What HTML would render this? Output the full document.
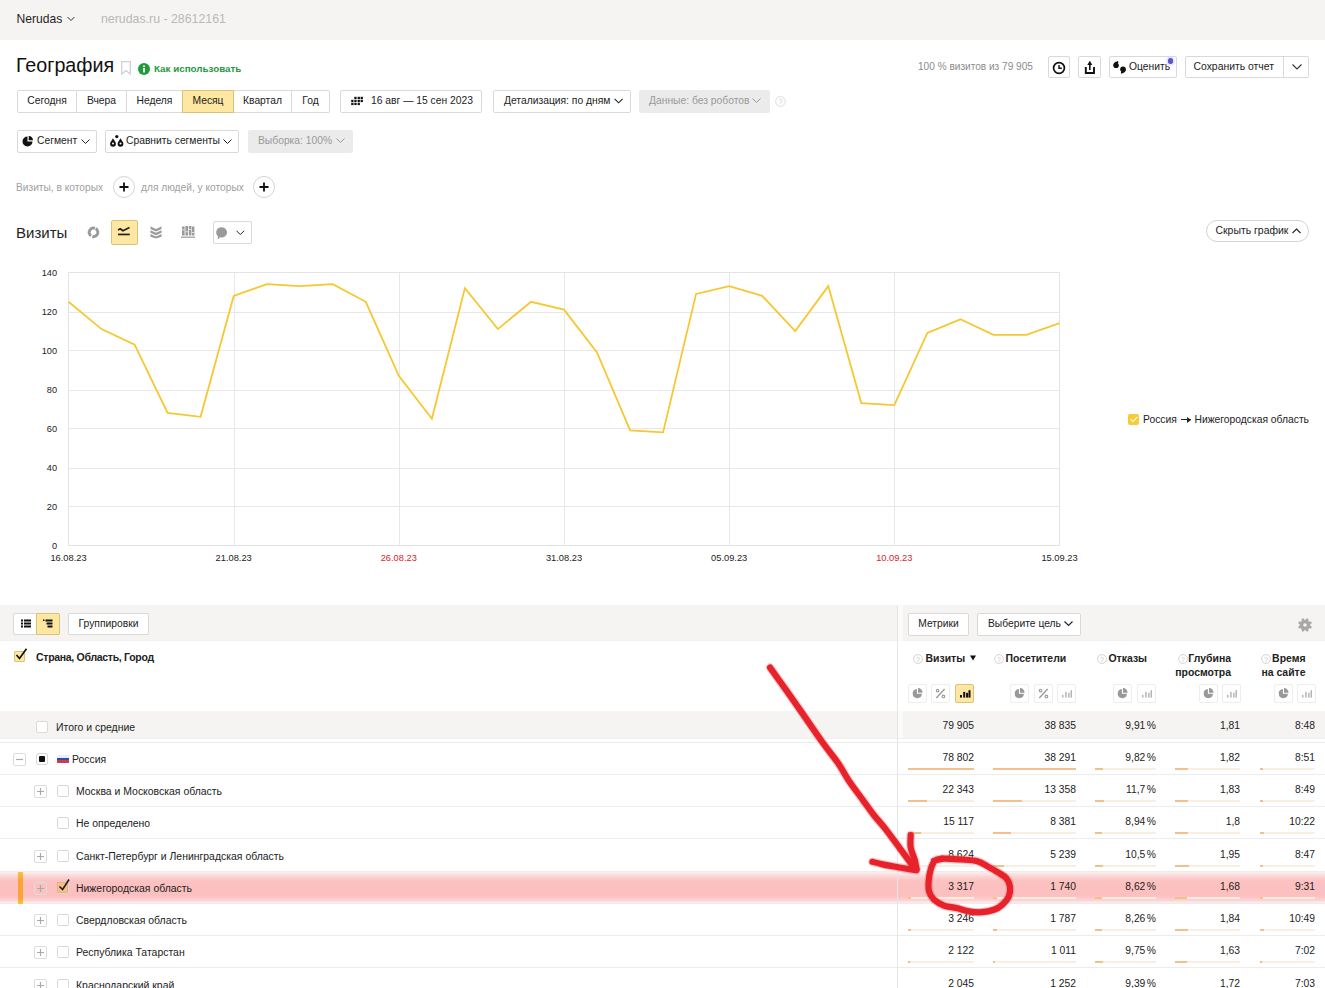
<!DOCTYPE html>
<html><head><meta charset="utf-8">
<style>
*{box-sizing:border-box;margin:0;padding:0}
html,body{width:1325px;height:988px;overflow:hidden;background:#fff}
body{position:relative;font-family:"Liberation Sans",sans-serif;color:#222;font-size:10.3px}
.a{position:absolute;white-space:nowrap}
.b{position:absolute;border:1px solid #d9d9d9;border-radius:2px;background:#fff;white-space:nowrap;font-size:10.3px;color:#222;line-height:19.5px}
.g{position:absolute;border-radius:2px;background:#ebebeb;white-space:nowrap;font-size:10.3px;color:#999;line-height:21.5px}
.seg{position:absolute;top:90px;height:23px;border:1px solid #d9d9d9;border-left:none;background:#fff;text-align:center;font-size:10.3px;color:#222;line-height:19.5px}
svg{position:absolute;overflow:visible}
</style></head><body>
<!-- top header -->
<div class="a" style="left:0;top:0;width:1325px;height:40px;background:#f5f4f2"></div>
<div class="a" style="left:16.5px;top:11.5px;font-size:12.1px;color:#1f1f1f">Nerudas</div>
<svg style="left:67px;top:16px" width="8" height="6"><path d="M0.5 1 L4 4.5 L7.5 1" fill="none" stroke="#333" stroke-width="1"/></svg>
<div class="a" style="left:101px;top:11.5px;font-size:12.35px;color:#b8b8b8">nerudas.ru - 28612161</div>

<!-- title -->
<div class="a" style="left:16px;top:54px;font-size:19.7px;color:#111">География</div>
<svg style="left:121px;top:61px" width="10" height="14"><path d="M0.7 0.7 H9.3 V13 L5 9.5 L0.7 13 Z" fill="none" stroke="#d0d0d0" stroke-width="1.3"/></svg>
<svg style="left:138px;top:63px" width="12" height="12"><circle cx="6" cy="6" r="6" fill="#1f9a3c"/><rect x="5.1" y="5" width="1.8" height="4.5" fill="#fff"/><circle cx="6" cy="3.3" r="1" fill="#fff"/></svg>
<div class="a" style="left:154px;top:63px;font-size:9.8px;font-weight:bold;color:#1f9a3c">Как использовать</div>

<div class="a" style="left:918px;top:61px;font-size:10.1px;color:#8c8c8c">100 % визитов из 79 905</div>
<div class="b" style="left:1048px;top:56px;width:22px;height:22px"></div>
<svg style="left:1051.5px;top:60.5px" width="14" height="14"><circle cx="7" cy="7" r="5.4" fill="none" stroke="#111" stroke-width="1.7"/><path d="M7 4 V7.3 H9.8" fill="none" stroke="#111" stroke-width="1.4"/></svg>
<div class="b" style="left:1078px;top:56px;width:23px;height:22px"></div>
<svg style="left:1083px;top:59px" width="14" height="16"><path d="M4.3 6 L6.8 1.8 L9.3 6Z" fill="#111"/><rect x="6" y="5" width="1.6" height="6" fill="#111"/><path d="M2.8 8 V14 H11 V8" fill="none" stroke="#111" stroke-width="1.9"/></svg>
<div class="b" style="left:1109px;top:56px;width:68px;height:22px;padding-left:19px">Оценить</div>
<svg style="left:1113px;top:60.5px" width="15" height="13"><circle cx="3.1" cy="4.4" r="2.7" fill="#111"/><path d="M0.4 4.4 C0.4 2.2 2 0.6 5 0 L5.4 1.7 C4.4 2 3.9 2.6 4.6 3 L1.6 4.6Z" fill="#111"/><circle cx="10" cy="8.3" r="2.8" fill="#111"/><path d="M12.8 8.3 C12.8 10.6 11.2 12.2 8.2 12.8 L7.8 11.1 C8.8 10.8 9.3 10.2 8.6 9.8 L11.6 8.2Z" fill="#111"/></svg>
<div class="a" style="left:1168px;top:58px;width:4.5px;height:5.5px;border-radius:50%;background:#5757c9;box-shadow:0 0 2px 1.5px #dcdcfa"></div>
<div class="b" style="left:1185px;top:56px;width:124px;height:22px"></div>
<div class="a" style="left:1193.5px;top:61px;font-size:10.4px;color:#222">Сохранить отчет</div>
<div class="a" style="left:1283px;top:57px;width:1px;height:20px;background:#d9d9d9"></div>
<svg style="left:1292px;top:64px" width="10" height="6"><path d="M0.5 0.5 L5 5 L9.5 0.5" fill="none" stroke="#333" stroke-width="1.1"/></svg>

<!-- period segmented -->
<div class="seg" style="left:17px;width:60px;border-left:1px solid #d9d9d9;border-radius:2px 0 0 2px">Сегодня</div>
<div class="seg" style="left:77px;width:50px">Вчера</div>
<div class="seg" style="left:127px;width:56px">Неделя</div>
<div class="seg" style="left:182px;width:52px;background:#fde7a1;border:1px solid #d9c27c">Месяц</div>
<div class="seg" style="left:234px;width:58px">Квартал</div>
<div class="seg" style="left:292px;width:38px;border-radius:0 2px 2px 0">Год</div>

<div class="b" style="left:340px;top:90px;width:142px;height:23px;padding-left:30px">16 авг — 15 сен 2023</div>
<svg style="left:351px;top:96px" width="13" height="11"><g fill="#111"><rect x="3.3" y="0.8" width="2.3" height="2.3"/><rect x="6.6" y="0.8" width="2.3" height="2.3"/><rect x="9.6" y="0.8" width="2.3" height="2.3"/><rect x="0.2" y="3.8" width="2.3" height="2.3"/><rect x="3.3" y="3.8" width="2.3" height="2.3"/><rect x="6.6" y="3.8" width="2.3" height="2.3"/><rect x="9.6" y="3.8" width="2.3" height="2.3"/><rect x="0.2" y="6.8" width="2.3" height="2.3"/><rect x="3.3" y="6.8" width="2.3" height="2.3"/><rect x="6.6" y="6.8" width="2.3" height="2.3"/></g></svg>
<div class="b" style="left:493px;top:90px;width:138px;height:23px;padding-left:10px">Детализация: по дням</div>
<svg style="left:614px;top:98px" width="10" height="6"><path d="M0.6 0.8 L4.6 4.8 L8.6 0.8" fill="none" stroke="#222" stroke-width="1.1"/></svg>
<div class="g" style="left:639px;top:90px;width:131px;height:23px;padding-left:10px">Данные: без роботов</div>
<svg style="left:752px;top:98px" width="9" height="6"><path d="M0.5 0.5 L4.5 4.5 L8.5 0.5" fill="none" stroke="#999" stroke-width="1"/></svg>
<svg style="left:775px;top:96px" width="11" height="11"><circle cx="5.5" cy="5.5" r="4.8" fill="none" stroke="#dcdcdc" stroke-width="1"/><text x="5.5" y="8.3" font-size="7.5" text-anchor="middle" fill="#ccc" font-family="Liberation Sans">?</text></svg>

<!-- segment row -->
<div class="b" style="left:17px;top:130px;width:80px;height:23px;padding-left:19px">Сегмент</div>
<svg style="left:22px;top:136px" width="11" height="11"><path d="M5.5 0.5 A5 5 0 1 0 10.5 5.5 L5.5 5.5 Z" fill="#111"/><path d="M6.7 0 A4.6 4.6 0 0 1 11 4.3 L6.7 4.3Z" fill="#111"/></svg>
<svg style="left:81px;top:139px" width="9" height="6"><path d="M0.5 0.5 L4.5 4.5 L8.5 0.5" fill="none" stroke="#222" stroke-width="1"/></svg>
<div class="b" style="left:105px;top:130px;width:134px;height:23px;padding-left:20px">Сравнить сегменты</div>
<svg style="left:110px;top:135px" width="14" height="12"><path d="M3 3.2 L5.6 7.6 A2.9 2.9 0 1 1 0.4 7.6 Z" fill="#111"/><circle cx="3" cy="8.6" r="1" fill="#fff"/><path d="M10.5 3.2 L13.1 7.6 A2.9 2.9 0 1 1 7.9 7.6 Z" fill="#111"/><circle cx="10.5" cy="8.6" r="1" fill="#fff"/><circle cx="6.8" cy="1.6" r="1.6" fill="#111"/></svg>
<svg style="left:223px;top:139px" width="9" height="6"><path d="M0.5 0.5 L4.5 4.5 L8.5 0.5" fill="none" stroke="#222" stroke-width="1"/></svg>
<div class="g" style="left:248px;top:130px;width:105px;height:23px;padding-left:10px">Выборка: 100%</div>
<svg style="left:336px;top:138px" width="9" height="6"><path d="M0.5 0.5 L4.5 4.5 L8.5 0.5" fill="none" stroke="#999" stroke-width="1"/></svg>

<!-- filters -->
<div class="a" style="left:16px;top:182px;font-size:10.2px;color:#a0a0a0">Визиты, в которых</div>
<div class="a" style="left:113px;top:176px;width:22px;height:22px;border:1px solid #d4d4d4;border-radius:50%"></div>
<svg style="left:119px;top:182px" width="10" height="10"><path d="M5 0.5 V9.5 M0.5 5 H9.5" stroke="#111" stroke-width="1.8"/></svg>
<div class="a" style="left:141px;top:182px;font-size:10.2px;color:#a0a0a0">для людей, у которых</div>
<div class="a" style="left:253px;top:176px;width:22px;height:22px;border:1px solid #d4d4d4;border-radius:50%"></div>
<svg style="left:259px;top:182px" width="10" height="10"><path d="M5 0.5 V9.5 M0.5 5 H9.5" stroke="#111" stroke-width="1.8"/></svg>

<!-- chart header -->
<div class="a" style="left:16px;top:224px;font-size:15px;color:#222">Визиты</div>
<svg style="left:87px;top:226px" width="13" height="13"><circle cx="6.5" cy="6.3" r="4.3" fill="none" stroke="#9a9a9a" stroke-width="3" stroke-dasharray="12 1.5 12 1.5" transform="rotate(-60 6.5 6.3)"/></svg>
<div class="a" style="left:111px;top:220px;width:27px;height:25px;background:#fde7a1;border:1px solid #d9c27c;border-radius:2px"></div>
<svg style="left:117px;top:225px" width="15" height="14"><path d="M1 5 L3.2 3.8 L6 5.8 L12.5 2.5" fill="none" stroke="#222" stroke-width="1.7" stroke-linejoin="round"/><rect x="1" y="8.6" width="11.8" height="1.7" fill="#222"/></svg>
<svg style="left:150px;top:226px" width="13" height="13"><path d="M0.5 0.5 L6 3 L11.5 0.5 V3 L6 5.5 L0.5 3Z M0.5 4.2 L6 6.7 L11.5 4.2 V6.7 L6 9.2 L0.5 6.7Z M0.5 7.9 L6 10.4 L11.5 7.9 V10.8 L6 12.5 L0.5 10.8Z" fill="#9a9a9a"/></svg>
<svg style="left:181px;top:225px" width="14" height="14"><g fill="#9a9a9a"><rect x="1" y="1.5" width="2.6" height="9"/><rect x="4.4" y="1" width="2.6" height="9.5"/><rect x="7.8" y="1" width="2.6" height="9.5"/><rect x="11" y="1.5" width="2.4" height="9"/></g><g fill="#fff"><rect x="1" y="4.5" width="2.6" height="0.7"/><rect x="4.4" y="6.5" width="2.6" height="0.7"/><rect x="7.8" y="4" width="2.6" height="0.7"/><rect x="11" y="7" width="2.4" height="0.7"/></g><rect x="0" y="11.6" width="14" height="1.2" fill="#9a9a9a"/></svg>
<div class="a" style="left:213px;top:221px;width:39px;height:23px;border:1px solid #d9d9d9;border-radius:2px"></div>
<svg style="left:216px;top:227px" width="12" height="13"><path d="M5.6 0.3 A5.3 5.1 0 1 1 4 10.2 L1.6 12.6 L2 9.2 A5.3 5.1 0 0 1 5.6 0.3Z" fill="#9a9a9a"/></svg>
<svg style="left:236px;top:230px" width="9" height="6"><path d="M0.5 0.8 L4.3 4.6 L8.1 0.8" fill="none" stroke="#222" stroke-width="1"/></svg>

<div class="a" style="left:1206px;top:220px;width:103px;height:22px;border:1px solid #d4d4d4;border-radius:11px"></div>
<div class="a" style="left:1215.5px;top:225px;font-size:10.45px;color:#222">Скрыть график</div>
<svg style="left:1292px;top:228px" width="9" height="6"><path d="M0.5 5 L4.5 1 L8.5 5" fill="none" stroke="#222" stroke-width="1.1"/></svg>

<!-- CHART -->
<svg id="chart" style="left:0;top:0" width="1325" height="600">
<line x1="68.5" y1="506.5" x2="1059.5" y2="506.5" stroke="#e8e8e8" stroke-width="1"/>
<line x1="68.5" y1="468.5" x2="1059.5" y2="468.5" stroke="#e8e8e8" stroke-width="1"/>
<line x1="68.5" y1="428.5" x2="1059.5" y2="428.5" stroke="#e8e8e8" stroke-width="1"/>
<line x1="68.5" y1="390.5" x2="1059.5" y2="390.5" stroke="#e8e8e8" stroke-width="1"/>
<line x1="68.5" y1="350.5" x2="1059.5" y2="350.5" stroke="#e8e8e8" stroke-width="1"/>
<line x1="68.5" y1="312.5" x2="1059.5" y2="312.5" stroke="#e8e8e8" stroke-width="1"/>
<line x1="68.5" y1="272.5" x2="1059.5" y2="272.5" stroke="#e8e8e8" stroke-width="1"/>
<line x1="234.5" y1="272.5" x2="234.5" y2="545.5" stroke="#e8e8e8" stroke-width="1"/>
<line x1="399.5" y1="272.5" x2="399.5" y2="545.5" stroke="#e8e8e8" stroke-width="1"/>
<line x1="564.5" y1="272.5" x2="564.5" y2="545.5" stroke="#e8e8e8" stroke-width="1"/>
<line x1="729.5" y1="272.5" x2="729.5" y2="545.5" stroke="#e8e8e8" stroke-width="1"/>
<line x1="894.5" y1="272.5" x2="894.5" y2="545.5" stroke="#e8e8e8" stroke-width="1"/>
<rect x="68.5" y="272.5" width="991.0" height="273.0" fill="none" stroke="#e3e3e3" stroke-width="1"/>
<text x="57" y="548.8" text-anchor="end" font-size="9.2" fill="#222" font-family="Liberation Sans">0</text>
<text x="57" y="509.8" text-anchor="end" font-size="9.2" fill="#222" font-family="Liberation Sans">20</text>
<text x="57" y="470.8" text-anchor="end" font-size="9.2" fill="#222" font-family="Liberation Sans">40</text>
<text x="57" y="431.8" text-anchor="end" font-size="9.2" fill="#222" font-family="Liberation Sans">60</text>
<text x="57" y="392.8" text-anchor="end" font-size="9.2" fill="#222" font-family="Liberation Sans">80</text>
<text x="57" y="353.8" text-anchor="end" font-size="9.2" fill="#222" font-family="Liberation Sans">100</text>
<text x="57" y="314.8" text-anchor="end" font-size="9.2" fill="#222" font-family="Liberation Sans">120</text>
<text x="57" y="275.8" text-anchor="end" font-size="9.2" fill="#222" font-family="Liberation Sans">140</text>
<text x="68.5" y="561" text-anchor="middle" font-size="9.3" fill="#222" font-family="Liberation Sans">16.08.23</text>
<text x="233.7" y="561" text-anchor="middle" font-size="9.3" fill="#222" font-family="Liberation Sans">21.08.23</text>
<text x="398.8" y="561" text-anchor="middle" font-size="9.3" fill="#d9232d" font-family="Liberation Sans">26.08.23</text>
<text x="564.0" y="561" text-anchor="middle" font-size="9.3" fill="#222" font-family="Liberation Sans">31.08.23</text>
<text x="729.2" y="561" text-anchor="middle" font-size="9.3" fill="#222" font-family="Liberation Sans">05.09.23</text>
<text x="894.3" y="561" text-anchor="middle" font-size="9.3" fill="#d9232d" font-family="Liberation Sans">10.09.23</text>
<text x="1059.5" y="561" text-anchor="middle" font-size="9.3" fill="#222" font-family="Liberation Sans">15.09.23</text>
<polyline points="68.5,301.8 101.5,329.1 134.6,344.6 167.6,412.9 200.6,416.8 233.7,295.9 266.7,284.2 299.7,286.1 332.8,284.2 365.8,301.8 398.8,375.9 431.9,418.8 464.9,288.1 497.9,329.1 531.0,301.8 564.0,309.6 597.0,352.4 630.1,430.4 663.1,432.4 696.1,293.9 729.2,286.1 762.2,295.9 795.2,331.0 828.3,286.1 861.3,403.1 894.3,405.1 927.4,332.9 960.4,319.3 993.4,334.9 1026.5,334.9 1059.5,323.2" fill="none" stroke="#f5c832" stroke-width="1.8" stroke-linejoin="miter"/>
</svg>

<!-- legend -->
<div class="a" style="left:1128px;top:414px;width:11px;height:11px;border-radius:2px;background:#f8cb35"></div>
<svg style="left:1130px;top:416px" width="8" height="7"><path d="M0.7 3.2 L3 5.6 L7.3 0.8" fill="none" stroke="#fff" stroke-width="1.1"/></svg>
<div class="a" style="left:1143px;top:414px;font-size:10.3px;color:#222">Россия <span style="display:inline-block;width:10px;height:1.3px;background:#222;vertical-align:3px;position:relative;margin:0 1px"></span> Нижегородская область</div><svg style="left:1187px;top:417px" width="4" height="6"><path d="M0 0 L4 3 L0 6Z" fill="#222"/></svg>

<!-- TABLE -->
<div id="table">
<div class="a" style="left:0;top:605px;width:1325px;height:36px;background:#f5f4f2;border-bottom:1px solid #f0efed"></div>
<div class="a" style="left:897px;top:605px;width:1px;height:383px;background:#e6e6e6"></div>
<div class="a" style="left:898px;top:605px;width:5px;height:36px;background:#fafaf9"></div>
<div class="a" style="left:13px;top:613px;width:47px;height:22px;border:1px solid #d9d9d9;border-radius:2px;background:#fff"></div>
<div class="a" style="left:36px;top:613px;width:24px;height:22px;background:#fde7a1;border:1px solid #d9c27c;border-radius:0 2px 2px 0"></div>
<svg style="left:21px;top:619px" width="10" height="9"><g fill="#111"><rect x="0" y="0.5" width="2" height="2"/><rect x="3" y="0.5" width="7" height="2"/><rect x="0" y="3.5" width="2" height="2"/><rect x="3" y="3.5" width="7" height="2"/><rect x="0" y="6.5" width="2" height="2"/><rect x="3" y="6.5" width="7" height="2"/></g></svg>
<svg style="left:43px;top:619px" width="10" height="9"><g fill="#111"><rect x="0" y="0.5" width="1.5" height="1.5"/><rect x="2.5" y="0.5" width="7" height="2"/><rect x="3.5" y="3.5" width="6" height="2"/><rect x="4.5" y="6.5" width="5" height="2"/></g></svg>
<div class="b" style="left:68px;top:613px;width:81px;height:22px;text-align:center">Группировки</div>
<div class="b" style="left:908px;top:613px;width:61px;height:23px;text-align:center">Метрики</div>
<div class="b" style="left:977px;top:613px;width:104px;height:23px;padding-left:10px">Выберите цель</div>
<svg style="left:1064px;top:621px" width="9" height="6"><path d="M0.5 0.5 L4.5 4.5 L8.5 0.5" fill="none" stroke="#222" stroke-width="1.1"/></svg>
<svg style="left:1297.5px;top:617.5px" width="14" height="14" viewBox="0 0 14 14"><path transform="rotate(22 7 7)" fill="#a8a8a8" d="M6 0h2l.4 1.9 1.3.6 1.6-1.1 1.4 1.4-1.1 1.6.6 1.3L14 6v2l-1.9.4-.6 1.3 1.1 1.6-1.4 1.4-1.6-1.1-1.3.6L8 14H6l-.4-1.9-1.3-.6-1.6 1.1-1.4-1.4 1.1-1.6-.6-1.3L0 8V6l1.9-.4.6-1.3L1.4 2.7l1.4-1.4 1.6 1.1 1.3-.6Z"/><circle cx="7" cy="7" r="1.8" fill="#f5f4f2"/></svg>
<div class="a" style="left:14px;top:651px;width:11px;height:11px;background:#fde7a1;border:1px solid #d9c27c;border-radius:1px"></div>
<svg style="left:15px;top:648px" width="13" height="13"><path d="M1.5 7 L4.5 10.5 L11.5 0.8" fill="none" stroke="#111" stroke-width="1.7"/></svg>
<div class="a" style="left:36px;top:651px;font-size:10.5px;letter-spacing:-0.3px;font-weight:bold;color:#222">Страна, Область, Город</div>
<svg style="left:913px;top:654px" width="10" height="10"><circle cx="5" cy="5" r="4.4" fill="none" stroke="#d4d4d4" stroke-width="1"/><text x="5" y="7.6" font-size="7" text-anchor="middle" fill="#c8c8c8" font-family="Liberation Sans">?</text></svg>
<div class="a" style="left:925.5px;top:652px;font-size:10.45px;font-weight:bold;color:#222;line-height:14px">Визиты</div>
<svg style="left:970px;top:655px" width="6" height="6"><path d="M0 0.5 H6 L3 5.5Z" fill="#111"/></svg>
<svg style="left:994px;top:654px" width="10" height="10"><circle cx="5" cy="5" r="4.4" fill="none" stroke="#d4d4d4" stroke-width="1"/><text x="5" y="7.6" font-size="7" text-anchor="middle" fill="#c8c8c8" font-family="Liberation Sans">?</text></svg>
<div class="a" style="left:1005.5px;top:652px;font-size:10.45px;font-weight:bold;color:#222;line-height:14px">Посетители</div>
<svg style="left:1097px;top:654px" width="10" height="10"><circle cx="5" cy="5" r="4.4" fill="none" stroke="#d4d4d4" stroke-width="1"/><text x="5" y="7.6" font-size="7" text-anchor="middle" fill="#c8c8c8" font-family="Liberation Sans">?</text></svg>
<div class="a" style="left:1108.5px;top:652px;font-size:10.45px;font-weight:bold;color:#222;line-height:14px">Отказы</div>
<svg style="left:1178px;top:654px" width="10" height="10"><circle cx="5" cy="5" r="4.4" fill="none" stroke="#d4d4d4" stroke-width="1"/><text x="5" y="7.6" font-size="7" text-anchor="middle" fill="#c8c8c8" font-family="Liberation Sans">?</text></svg>
<div class="a" style="left:1131px;width:100px;text-align:right;top:652px;font-size:10.45px;font-weight:bold;color:#222;line-height:14px">Глубина</div>
<div class="a" style="left:1131px;width:100px;text-align:right;top:666px;font-size:10.45px;font-weight:bold;color:#222;line-height:14px">просмотра</div>
<svg style="left:1261px;top:654px" width="10" height="10"><circle cx="5" cy="5" r="4.4" fill="none" stroke="#d4d4d4" stroke-width="1"/><text x="5" y="7.6" font-size="7" text-anchor="middle" fill="#c8c8c8" font-family="Liberation Sans">?</text></svg>
<div class="a" style="left:1205.5px;width:100px;text-align:right;top:652px;font-size:10.45px;font-weight:bold;color:#222;line-height:14px">Время</div>
<div class="a" style="left:1205.5px;width:100px;text-align:right;top:666px;font-size:10.45px;font-weight:bold;color:#222;line-height:14px">на сайте</div>
<div class="a" style="left:908px;top:684px;width:19px;height:19px;border:1px solid #ededed;border-radius:2px;background:#fff"></div>
<svg style="left:912px;top:688px" width="11" height="11"><path d="M4.9 1 A4.6 4.6 0 1 0 9.9 5.8 L4.9 5.8Z" fill="#999"/><path d="M6 0 A4.6 4.6 0 0 1 10.6 4.7 L6 4.7Z" fill="#999"/></svg>
<div class="a" style="left:931px;top:684px;width:19px;height:19px;border:1px solid #ededed;border-radius:2px;background:#fff"></div>
<svg style="left:935px;top:688px" width="11" height="11"><path d="M9.6 1 L1.3 10" stroke="#9a9a9a" stroke-width="1.3"/><circle cx="2.6" cy="2.6" r="1.3" fill="none" stroke="#9a9a9a" stroke-width="1.1"/><circle cx="8.4" cy="8.4" r="1.3" fill="none" stroke="#9a9a9a" stroke-width="1.1"/></svg>
<div class="a" style="left:955px;top:684px;width:19px;height:19px;border:1px solid #d9c27c;border-radius:2px;background:#fde7a1"></div>
<svg style="left:959px;top:688px" width="11" height="11"><g fill="#111"><rect x="1" y="7" width="2" height="2.6"/><rect x="4.2" y="3.9" width="2" height="5.7"/><rect x="7.1" y="4.8" width="2" height="4.8"/><rect x="9.5" y="2.2" width="2" height="7.4"/></g></svg>
<div class="a" style="left:1010px;top:684px;width:19px;height:19px;border:1px solid #ededed;border-radius:2px;background:#fff"></div>
<svg style="left:1014px;top:688px" width="11" height="11"><path d="M4.9 1 A4.6 4.6 0 1 0 9.9 5.8 L4.9 5.8Z" fill="#999"/><path d="M6 0 A4.6 4.6 0 0 1 10.6 4.7 L6 4.7Z" fill="#999"/></svg>
<div class="a" style="left:1034px;top:684px;width:19px;height:19px;border:1px solid #ededed;border-radius:2px;background:#fff"></div>
<svg style="left:1038px;top:688px" width="11" height="11"><path d="M9.6 1 L1.3 10" stroke="#9a9a9a" stroke-width="1.3"/><circle cx="2.6" cy="2.6" r="1.3" fill="none" stroke="#9a9a9a" stroke-width="1.1"/><circle cx="8.4" cy="8.4" r="1.3" fill="none" stroke="#9a9a9a" stroke-width="1.1"/></svg>
<div class="a" style="left:1057px;top:684px;width:19px;height:19px;border:1px solid #ededed;border-radius:2px;background:#fff"></div>
<svg style="left:1061px;top:688px" width="11" height="11"><g fill="#b5b5b5"><rect x="1" y="7" width="1.5" height="2.6"/><rect x="4.2" y="3.9" width="1.5" height="5.7"/><rect x="7.1" y="4.8" width="1.5" height="4.8"/><rect x="9.5" y="2.2" width="1.5" height="7.4"/></g></svg>
<div class="a" style="left:1113px;top:684px;width:19px;height:19px;border:1px solid #ededed;border-radius:2px;background:#fff"></div>
<svg style="left:1117px;top:688px" width="11" height="11"><path d="M4.9 1 A4.6 4.6 0 1 0 9.9 5.8 L4.9 5.8Z" fill="#999"/><path d="M6 0 A4.6 4.6 0 0 1 10.6 4.7 L6 4.7Z" fill="#999"/></svg>
<div class="a" style="left:1137px;top:684px;width:19px;height:19px;border:1px solid #ededed;border-radius:2px;background:#fff"></div>
<svg style="left:1141px;top:688px" width="11" height="11"><g fill="#b5b5b5"><rect x="1" y="7" width="1.5" height="2.6"/><rect x="4.2" y="3.9" width="1.5" height="5.7"/><rect x="7.1" y="4.8" width="1.5" height="4.8"/><rect x="9.5" y="2.2" width="1.5" height="7.4"/></g></svg>
<div class="a" style="left:1199px;top:684px;width:19px;height:19px;border:1px solid #ededed;border-radius:2px;background:#fff"></div>
<svg style="left:1203px;top:688px" width="11" height="11"><path d="M4.9 1 A4.6 4.6 0 1 0 9.9 5.8 L4.9 5.8Z" fill="#999"/><path d="M6 0 A4.6 4.6 0 0 1 10.6 4.7 L6 4.7Z" fill="#999"/></svg>
<div class="a" style="left:1222px;top:684px;width:19px;height:19px;border:1px solid #ededed;border-radius:2px;background:#fff"></div>
<svg style="left:1226px;top:688px" width="11" height="11"><g fill="#b5b5b5"><rect x="1" y="7" width="1.5" height="2.6"/><rect x="4.2" y="3.9" width="1.5" height="5.7"/><rect x="7.1" y="4.8" width="1.5" height="4.8"/><rect x="9.5" y="2.2" width="1.5" height="7.4"/></g></svg>
<div class="a" style="left:1274px;top:684px;width:19px;height:19px;border:1px solid #ededed;border-radius:2px;background:#fff"></div>
<svg style="left:1278px;top:688px" width="11" height="11"><path d="M4.9 1 A4.6 4.6 0 1 0 9.9 5.8 L4.9 5.8Z" fill="#999"/><path d="M6 0 A4.6 4.6 0 0 1 10.6 4.7 L6 4.7Z" fill="#999"/></svg>
<div class="a" style="left:1297px;top:684px;width:19px;height:19px;border:1px solid #ededed;border-radius:2px;background:#fff"></div>
<svg style="left:1301px;top:688px" width="11" height="11"><g fill="#b5b5b5"><rect x="1" y="7" width="1.5" height="2.6"/><rect x="4.2" y="3.9" width="1.5" height="5.7"/><rect x="7.1" y="4.8" width="1.5" height="4.8"/><rect x="9.5" y="2.2" width="1.5" height="7.4"/></g></svg>
<div class="a" style="left:0;top:872px;width:1325px;height:31px;background:linear-gradient(#fdf0f0 0px,#fcdcdc 3px,#fcc4c4 8px,#fcc0c0 12px,#fcc0c0 24px,#fcd2d2 28px,#fdeeee 31px)"></div>
<div class="a" style="left:0;top:711px;width:1325px;height:27px;background:#f5f4f2"></div>
<div class="a" style="left:0;top:738px;width:1325px;height:1px;background:#efefef"></div>
<div class="a" style="left:898px;top:711px;width:5px;height:27px;background:#fafaf9"></div>
<div class="a" style="left:0;top:742px;width:1325px;height:1px;background:#ececec"></div>
<div class="a" style="left:36px;top:721px;width:12px;height:12px;border:1px solid #d9d9d9;border-radius:2px;background:#fff"></div>
<div class="a" style="left:56px;top:721px;font-size:10.45px;color:#222;line-height:14px">Итого и средние</div>
<div class="a" style="left:874px;width:100px;text-align:right;top:719px;font-size:10.3px;color:#222;line-height:14px">79 905</div>
<div class="a" style="left:976px;width:100px;text-align:right;top:719px;font-size:10.3px;color:#222;line-height:14px">38 835</div>
<div class="a" style="left:1056px;width:100px;text-align:right;top:719px;font-size:10.3px;color:#222;line-height:14px">9,91<span style="margin-left:1.5px">%</span></div>
<div class="a" style="left:1140px;width:100px;text-align:right;top:719px;font-size:10.3px;color:#222;line-height:14px">1,81</div>
<div class="a" style="left:1215px;width:100px;text-align:right;top:719px;font-size:10.3px;color:#222;line-height:14px">8:48</div>
<div class="a" style="left:0;top:774px;width:1325px;height:1px;background:#ececec"></div>
<div class="a" style="left:13px;top:753px;width:13px;height:13px;border:1px solid #dcdcdc;border-radius:2px;background:#fff"></div>
<svg style="left:13px;top:753px" width="13" height="13"><path d="M3 6.5 H10" stroke="#aaa" stroke-width="1.2"/></svg>
<div class="a" style="left:36px;top:753px;width:12px;height:12px;border:1px solid #d9d9d9;border-radius:2px;background:#fff"></div>
<div class="a" style="left:39px;top:756px;width:6px;height:6px;border-radius:1px;background:#111"></div>
<div class="a" style="left:57px;top:755px;width:12px;height:8px;background:linear-gradient(#e9eef8 0 2.6px,#2f49b8 2.6px 5.3px,#cf3c46 5.3px)"></div>
<div class="a" style="left:72px;top:753px;font-size:10.45px;color:#222;line-height:14px">Россия</div>
<div class="a" style="left:874px;width:100px;text-align:right;top:751px;font-size:10.3px;color:#222;line-height:14px">78 802</div>
<div class="a" style="left:976px;width:100px;text-align:right;top:751px;font-size:10.3px;color:#222;line-height:14px">38 291</div>
<div class="a" style="left:1056px;width:100px;text-align:right;top:751px;font-size:10.3px;color:#222;line-height:14px">9,82<span style="margin-left:1.5px">%</span></div>
<div class="a" style="left:1140px;width:100px;text-align:right;top:751px;font-size:10.3px;color:#222;line-height:14px">1,82</div>
<div class="a" style="left:1215px;width:100px;text-align:right;top:751px;font-size:10.3px;color:#222;line-height:14px">8:51</div>
<div class="a" style="left:908px;top:768px;width:66px;height:2px;background:#fbeee0"></div>
<div class="a" style="left:908px;top:768px;width:66px;height:2px;background:#f2c08c"></div>
<div class="a" style="left:993px;top:768px;width:83px;height:2px;background:#fbeee0"></div>
<div class="a" style="left:993px;top:768px;width:83px;height:2px;background:#f2c08c"></div>
<div class="a" style="left:1095px;top:768px;width:61px;height:2px;background:#fbeee0"></div>
<div class="a" style="left:1095px;top:768px;width:8px;height:2px;background:#f2c08c"></div>
<div class="a" style="left:1175px;top:768px;width:65px;height:2px;background:#fbeee0"></div>
<div class="a" style="left:1175px;top:768px;width:13px;height:2px;background:#f2c08c"></div>
<div class="a" style="left:1260px;top:768px;width:55px;height:2px;background:#fbeee0"></div>
<div class="a" style="left:1260px;top:768px;width:3px;height:2px;background:#f2c08c"></div>
<div class="a" style="left:0;top:806px;width:1325px;height:1px;background:#ececec"></div>
<div class="a" style="left:34px;top:785px;width:13px;height:13px;border:1px solid #dcdcdc;border-radius:2px;background:#fff"></div>
<svg style="left:34px;top:785px" width="13" height="13"><path d="M3 6.5 H10 M6.5 3 V10" stroke="#aaa" stroke-width="1.2"/></svg>
<div class="a" style="left:57px;top:785px;width:12px;height:12px;border:1px solid #d9d9d9;border-radius:2px;background:#fff"></div>
<div class="a" style="left:76px;top:785px;font-size:10.45px;color:#222;line-height:14px">Москва и Московская область</div>
<div class="a" style="left:874px;width:100px;text-align:right;top:783px;font-size:10.3px;color:#222;line-height:14px">22 343</div>
<div class="a" style="left:976px;width:100px;text-align:right;top:783px;font-size:10.3px;color:#222;line-height:14px">13 358</div>
<div class="a" style="left:1056px;width:100px;text-align:right;top:783px;font-size:10.3px;color:#222;line-height:14px">11,7<span style="margin-left:1.5px">%</span></div>
<div class="a" style="left:1140px;width:100px;text-align:right;top:783px;font-size:10.3px;color:#222;line-height:14px">1,83</div>
<div class="a" style="left:1215px;width:100px;text-align:right;top:783px;font-size:10.3px;color:#222;line-height:14px">8:49</div>
<div class="a" style="left:908px;top:800px;width:66px;height:2px;background:#fbeee0"></div>
<div class="a" style="left:908px;top:800px;width:19px;height:2px;background:#f2c08c"></div>
<div class="a" style="left:993px;top:800px;width:83px;height:2px;background:#fbeee0"></div>
<div class="a" style="left:993px;top:800px;width:29px;height:2px;background:#f2c08c"></div>
<div class="a" style="left:1095px;top:800px;width:61px;height:2px;background:#fbeee0"></div>
<div class="a" style="left:1095px;top:800px;width:9px;height:2px;background:#f2c08c"></div>
<div class="a" style="left:1175px;top:800px;width:65px;height:2px;background:#fbeee0"></div>
<div class="a" style="left:1175px;top:800px;width:13px;height:2px;background:#f2c08c"></div>
<div class="a" style="left:1260px;top:800px;width:55px;height:2px;background:#fbeee0"></div>
<div class="a" style="left:1260px;top:800px;width:3px;height:2px;background:#f2c08c"></div>
<div class="a" style="left:0;top:838px;width:1325px;height:1px;background:#ececec"></div>
<div class="a" style="left:57px;top:817px;width:12px;height:12px;border:1px solid #d9d9d9;border-radius:2px;background:#fff"></div>
<div class="a" style="left:76px;top:817px;font-size:10.45px;color:#222;line-height:14px">Не определено</div>
<div class="a" style="left:874px;width:100px;text-align:right;top:815px;font-size:10.3px;color:#222;line-height:14px">15 117</div>
<div class="a" style="left:976px;width:100px;text-align:right;top:815px;font-size:10.3px;color:#222;line-height:14px">8 381</div>
<div class="a" style="left:1056px;width:100px;text-align:right;top:815px;font-size:10.3px;color:#222;line-height:14px">8,94<span style="margin-left:1.5px">%</span></div>
<div class="a" style="left:1140px;width:100px;text-align:right;top:815px;font-size:10.3px;color:#222;line-height:14px">1,8</div>
<div class="a" style="left:1215px;width:100px;text-align:right;top:815px;font-size:10.3px;color:#222;line-height:14px">10:22</div>
<div class="a" style="left:908px;top:832px;width:66px;height:2px;background:#fbeee0"></div>
<div class="a" style="left:908px;top:832px;width:13px;height:2px;background:#f2c08c"></div>
<div class="a" style="left:993px;top:832px;width:83px;height:2px;background:#fbeee0"></div>
<div class="a" style="left:993px;top:832px;width:18px;height:2px;background:#f2c08c"></div>
<div class="a" style="left:1095px;top:832px;width:61px;height:2px;background:#fbeee0"></div>
<div class="a" style="left:1095px;top:832px;width:7px;height:2px;background:#f2c08c"></div>
<div class="a" style="left:1175px;top:832px;width:65px;height:2px;background:#fbeee0"></div>
<div class="a" style="left:1175px;top:832px;width:13px;height:2px;background:#f2c08c"></div>
<div class="a" style="left:1260px;top:832px;width:55px;height:2px;background:#fbeee0"></div>
<div class="a" style="left:1260px;top:832px;width:4px;height:2px;background:#f2c08c"></div>
<div class="a" style="left:0;top:871px;width:1325px;height:1px;background:#ececec"></div>
<div class="a" style="left:34px;top:850px;width:13px;height:13px;border:1px solid #dcdcdc;border-radius:2px;background:#fff"></div>
<svg style="left:34px;top:850px" width="13" height="13"><path d="M3 6.5 H10 M6.5 3 V10" stroke="#aaa" stroke-width="1.2"/></svg>
<div class="a" style="left:57px;top:850px;width:12px;height:12px;border:1px solid #d9d9d9;border-radius:2px;background:#fff"></div>
<div class="a" style="left:76px;top:850px;font-size:10.45px;color:#222;line-height:14px">Санкт-Петербург и Ленинградская область</div>
<div class="a" style="left:874px;width:100px;text-align:right;top:848px;font-size:10.3px;color:#222;line-height:14px">8 624</div>
<div class="a" style="left:976px;width:100px;text-align:right;top:848px;font-size:10.3px;color:#222;line-height:14px">5 239</div>
<div class="a" style="left:1056px;width:100px;text-align:right;top:848px;font-size:10.3px;color:#222;line-height:14px">10,5<span style="margin-left:1.5px">%</span></div>
<div class="a" style="left:1140px;width:100px;text-align:right;top:848px;font-size:10.3px;color:#222;line-height:14px">1,95</div>
<div class="a" style="left:1215px;width:100px;text-align:right;top:848px;font-size:10.3px;color:#222;line-height:14px">8:47</div>
<div class="a" style="left:908px;top:865px;width:66px;height:2px;background:#fbeee0"></div>
<div class="a" style="left:908px;top:865px;width:7px;height:2px;background:#f2c08c"></div>
<div class="a" style="left:993px;top:865px;width:83px;height:2px;background:#fbeee0"></div>
<div class="a" style="left:993px;top:865px;width:11px;height:2px;background:#f2c08c"></div>
<div class="a" style="left:1095px;top:865px;width:61px;height:2px;background:#fbeee0"></div>
<div class="a" style="left:1095px;top:865px;width:8px;height:2px;background:#f2c08c"></div>
<div class="a" style="left:1175px;top:865px;width:65px;height:2px;background:#fbeee0"></div>
<div class="a" style="left:1175px;top:865px;width:14px;height:2px;background:#f2c08c"></div>
<div class="a" style="left:1260px;top:865px;width:55px;height:2px;background:#fbeee0"></div>
<div class="a" style="left:1260px;top:865px;width:3px;height:2px;background:#f2c08c"></div>
<div class="a" style="left:0;top:903px;width:1325px;height:1px;background:#ececec"></div>
<div class="a" style="left:34px;top:882px;width:13px;height:13px;border:1px solid #dcdcdc;border-radius:2px;background:transparent"></div>
<svg style="left:34px;top:882px" width="13" height="13"><path d="M3 6.5 H10 M6.5 3 V10" stroke="#aaa" stroke-width="1.2"/></svg>
<div class="a" style="left:57px;top:882px;width:12px;height:12px;border:1px solid #d9d9d9;border-radius:2px;background:transparent"></div>
<div class="a" style="left:57px;top:882px;width:11px;height:11px;border:1px solid #e9b27a;border-radius:1px;background:#f4bf8c"></div>
<svg style="left:58px;top:878px" width="13" height="15"><path d="M1.5 8.5 L4.6 11.5 L11 1.5" fill="none" stroke="#222" stroke-width="1.6"/></svg>
<div class="a" style="left:76px;top:882px;font-size:10.45px;color:#222;line-height:14px">Нижегородская область</div>
<div class="a" style="left:874px;width:100px;text-align:right;top:880px;font-size:10.3px;color:#222;line-height:14px">3 317</div>
<div class="a" style="left:976px;width:100px;text-align:right;top:880px;font-size:10.3px;color:#222;line-height:14px">1 740</div>
<div class="a" style="left:1056px;width:100px;text-align:right;top:880px;font-size:10.3px;color:#222;line-height:14px">8,62<span style="margin-left:1.5px">%</span></div>
<div class="a" style="left:1140px;width:100px;text-align:right;top:880px;font-size:10.3px;color:#222;line-height:14px">1,68</div>
<div class="a" style="left:1215px;width:100px;text-align:right;top:880px;font-size:10.3px;color:#222;line-height:14px">9:31</div>
<div class="a" style="left:908px;top:897px;width:66px;height:2px;background:#fbeee0"></div>
<div class="a" style="left:908px;top:897px;width:3px;height:2px;background:#f2c08c"></div>
<div class="a" style="left:993px;top:897px;width:83px;height:2px;background:#fbeee0"></div>
<div class="a" style="left:993px;top:897px;width:4px;height:2px;background:#f2c08c"></div>
<div class="a" style="left:1095px;top:897px;width:61px;height:2px;background:#fbeee0"></div>
<div class="a" style="left:1095px;top:897px;width:7px;height:2px;background:#f2c08c"></div>
<div class="a" style="left:1175px;top:897px;width:65px;height:2px;background:#fbeee0"></div>
<div class="a" style="left:1175px;top:897px;width:12px;height:2px;background:#f2c08c"></div>
<div class="a" style="left:1260px;top:897px;width:55px;height:2px;background:#fbeee0"></div>
<div class="a" style="left:1260px;top:897px;width:3px;height:2px;background:#f2c08c"></div>
<div class="a" style="left:0;top:935px;width:1325px;height:1px;background:#ececec"></div>
<div class="a" style="left:34px;top:914px;width:13px;height:13px;border:1px solid #dcdcdc;border-radius:2px;background:#fff"></div>
<svg style="left:34px;top:914px" width="13" height="13"><path d="M3 6.5 H10 M6.5 3 V10" stroke="#aaa" stroke-width="1.2"/></svg>
<div class="a" style="left:57px;top:914px;width:12px;height:12px;border:1px solid #d9d9d9;border-radius:2px;background:#fff"></div>
<div class="a" style="left:76px;top:914px;font-size:10.45px;color:#222;line-height:14px">Свердловская область</div>
<div class="a" style="left:874px;width:100px;text-align:right;top:912px;font-size:10.3px;color:#222;line-height:14px">3 246</div>
<div class="a" style="left:976px;width:100px;text-align:right;top:912px;font-size:10.3px;color:#222;line-height:14px">1 787</div>
<div class="a" style="left:1056px;width:100px;text-align:right;top:912px;font-size:10.3px;color:#222;line-height:14px">8,26<span style="margin-left:1.5px">%</span></div>
<div class="a" style="left:1140px;width:100px;text-align:right;top:912px;font-size:10.3px;color:#222;line-height:14px">1,84</div>
<div class="a" style="left:1215px;width:100px;text-align:right;top:912px;font-size:10.3px;color:#222;line-height:14px">10:49</div>
<div class="a" style="left:908px;top:929px;width:66px;height:2px;background:#fbeee0"></div>
<div class="a" style="left:908px;top:929px;width:3px;height:2px;background:#f2c08c"></div>
<div class="a" style="left:993px;top:929px;width:83px;height:2px;background:#fbeee0"></div>
<div class="a" style="left:993px;top:929px;width:4px;height:2px;background:#f2c08c"></div>
<div class="a" style="left:1095px;top:929px;width:61px;height:2px;background:#fbeee0"></div>
<div class="a" style="left:1095px;top:929px;width:7px;height:2px;background:#f2c08c"></div>
<div class="a" style="left:1175px;top:929px;width:65px;height:2px;background:#fbeee0"></div>
<div class="a" style="left:1175px;top:929px;width:13px;height:2px;background:#f2c08c"></div>
<div class="a" style="left:1260px;top:929px;width:55px;height:2px;background:#fbeee0"></div>
<div class="a" style="left:1260px;top:929px;width:4px;height:2px;background:#f2c08c"></div>
<div class="a" style="left:0;top:967px;width:1325px;height:1px;background:#ececec"></div>
<div class="a" style="left:34px;top:946px;width:13px;height:13px;border:1px solid #dcdcdc;border-radius:2px;background:#fff"></div>
<svg style="left:34px;top:946px" width="13" height="13"><path d="M3 6.5 H10 M6.5 3 V10" stroke="#aaa" stroke-width="1.2"/></svg>
<div class="a" style="left:57px;top:946px;width:12px;height:12px;border:1px solid #d9d9d9;border-radius:2px;background:#fff"></div>
<div class="a" style="left:76px;top:946px;font-size:10.45px;color:#222;line-height:14px">Республика Татарстан</div>
<div class="a" style="left:874px;width:100px;text-align:right;top:944px;font-size:10.3px;color:#222;line-height:14px">2 122</div>
<div class="a" style="left:976px;width:100px;text-align:right;top:944px;font-size:10.3px;color:#222;line-height:14px">1 011</div>
<div class="a" style="left:1056px;width:100px;text-align:right;top:944px;font-size:10.3px;color:#222;line-height:14px">9,75<span style="margin-left:1.5px">%</span></div>
<div class="a" style="left:1140px;width:100px;text-align:right;top:944px;font-size:10.3px;color:#222;line-height:14px">1,63</div>
<div class="a" style="left:1215px;width:100px;text-align:right;top:944px;font-size:10.3px;color:#222;line-height:14px">7:02</div>
<div class="a" style="left:908px;top:961px;width:66px;height:2px;background:#fbeee0"></div>
<div class="a" style="left:908px;top:961px;width:2px;height:2px;background:#f2c08c"></div>
<div class="a" style="left:993px;top:961px;width:83px;height:2px;background:#fbeee0"></div>
<div class="a" style="left:993px;top:961px;width:2px;height:2px;background:#f2c08c"></div>
<div class="a" style="left:1095px;top:961px;width:61px;height:2px;background:#fbeee0"></div>
<div class="a" style="left:1095px;top:961px;width:8px;height:2px;background:#f2c08c"></div>
<div class="a" style="left:1175px;top:961px;width:65px;height:2px;background:#fbeee0"></div>
<div class="a" style="left:1175px;top:961px;width:12px;height:2px;background:#f2c08c"></div>
<div class="a" style="left:1260px;top:961px;width:55px;height:2px;background:#fbeee0"></div>
<div class="a" style="left:1260px;top:961px;width:2px;height:2px;background:#f2c08c"></div>
<div class="a" style="left:0;top:1000px;width:1325px;height:1px;background:#ececec"></div>
<div class="a" style="left:34px;top:979px;width:13px;height:13px;border:1px solid #dcdcdc;border-radius:2px;background:#fff"></div>
<svg style="left:34px;top:979px" width="13" height="13"><path d="M3 6.5 H10 M6.5 3 V10" stroke="#aaa" stroke-width="1.2"/></svg>
<div class="a" style="left:57px;top:979px;width:12px;height:12px;border:1px solid #d9d9d9;border-radius:2px;background:#fff"></div>
<div class="a" style="left:76px;top:979px;font-size:10.45px;color:#222;line-height:14px">Краснодарский край</div>
<div class="a" style="left:874px;width:100px;text-align:right;top:977px;font-size:10.3px;color:#222;line-height:14px">2 045</div>
<div class="a" style="left:976px;width:100px;text-align:right;top:977px;font-size:10.3px;color:#222;line-height:14px">1 252</div>
<div class="a" style="left:1056px;width:100px;text-align:right;top:977px;font-size:10.3px;color:#222;line-height:14px">9,39<span style="margin-left:1.5px">%</span></div>
<div class="a" style="left:1140px;width:100px;text-align:right;top:977px;font-size:10.3px;color:#222;line-height:14px">1,72</div>
<div class="a" style="left:1215px;width:100px;text-align:right;top:977px;font-size:10.3px;color:#222;line-height:14px">7:03</div>
<div class="a" style="left:908px;top:994px;width:66px;height:2px;background:#fbeee0"></div>
<div class="a" style="left:908px;top:994px;width:2px;height:2px;background:#f2c08c"></div>
<div class="a" style="left:993px;top:994px;width:83px;height:2px;background:#fbeee0"></div>
<div class="a" style="left:993px;top:994px;width:3px;height:2px;background:#f2c08c"></div>
<div class="a" style="left:1095px;top:994px;width:61px;height:2px;background:#fbeee0"></div>
<div class="a" style="left:1095px;top:994px;width:8px;height:2px;background:#f2c08c"></div>
<div class="a" style="left:1175px;top:994px;width:65px;height:2px;background:#fbeee0"></div>
<div class="a" style="left:1175px;top:994px;width:12px;height:2px;background:#f2c08c"></div>
<div class="a" style="left:1260px;top:994px;width:55px;height:2px;background:#fbeee0"></div>
<div class="a" style="left:1260px;top:994px;width:2px;height:2px;background:#f2c08c"></div>
<div class="a" style="left:18px;top:872px;width:5px;height:32px;background:linear-gradient(#fcc23a,#f8a535 25%,#f8a535 80%,#fcc23a)"></div>
<div class="a" style="left:897px;top:605px;width:1px;height:383px;background:#e6e6e6"></div>
</div><!--endtable-->

<svg id="anno" style="left:0;top:0" width="1325" height="988"><path d="M770.1 667.6 C772.6 671.1 779.9 681.3 785.0 688.5 C790.1 695.7 794.2 701.6 800.5 710.6 C806.8 719.6 816.5 734.1 822.8 742.8 C829.0 751.5 833.6 756.6 838.0 763.0 C842.4 769.4 844.9 774.9 849.0 781.0 C853.1 787.1 858.4 793.8 862.5 799.5 C866.6 805.2 870.0 810.2 873.8 815.0 C877.5 819.8 880.8 823.0 885.0 828.4 C889.2 833.8 894.8 841.6 899.3 847.6 C903.8 853.6 909.2 861.1 912.0 864.6 C914.8 868.1 915.6 868.2 916.3 868.9" fill="none" stroke="#f04048" stroke-opacity="0.3" stroke-width="8.5" stroke-linecap="round" stroke-linejoin="round"/><path d="M872.4 861.8 C874.3 862.3 879.2 863.6 883.7 864.6 C888.2 865.6 893.9 866.5 899.3 867.5 C904.7 868.5 913.5 869.8 916.3 870.3" fill="none" stroke="#f04048" stroke-opacity="0.3" stroke-width="8.5" stroke-linecap="round" stroke-linejoin="round"/><path d="M910.7 835.0 C910.7 837.1 910.0 843.4 910.7 847.6 C911.4 851.8 914.0 856.9 914.9 860.4 C915.8 863.9 916.1 867.5 916.3 868.9" fill="none" stroke="#f04048" stroke-opacity="0.3" stroke-width="8.5" stroke-linecap="round" stroke-linejoin="round"/><path d="M934.1 860.8 C935.8 860.4 939.6 858.9 944.0 858.7 C948.4 858.5 955.2 859.1 960.7 859.5 C966.2 859.9 972.8 860.0 977.3 861.2 C981.8 862.4 984.5 864.7 988.0 866.6 C991.5 868.5 995.0 870.5 998.0 872.4 C1001.0 874.3 1004.3 875.9 1006.3 878.2 C1008.3 880.6 1009.6 883.5 1010.0 886.5 C1010.4 889.5 1010.1 893.5 1008.8 896.5 C1007.5 899.5 1004.7 902.6 1002.2 904.8 C999.7 907.0 997.4 908.6 993.9 909.8 C990.4 911.0 985.5 911.9 981.4 912.2 C977.2 912.5 973.1 912.1 969.0 911.4 C964.9 910.7 960.7 909.1 956.5 908.1 C952.3 907.1 947.7 907.0 944.0 905.6 C940.3 904.2 936.6 902.1 934.1 899.8 C931.6 897.4 930.0 894.7 929.1 891.5 C928.2 888.3 928.4 884.4 928.7 880.7 C929.0 877.0 929.8 872.4 930.8 869.1 C931.8 865.8 933.0 862.6 934.9 860.8 C936.8 859.0 940.8 858.9 942.0 858.5" fill="none" stroke="#f04048" stroke-opacity="0.3" stroke-width="8.5" stroke-linecap="round" stroke-linejoin="round"/><path d="M770.1 667.6 C772.6 671.1 779.9 681.3 785.0 688.5 C790.1 695.7 794.2 701.6 800.5 710.6 C806.8 719.6 816.5 734.1 822.8 742.8 C829.0 751.5 833.6 756.6 838.0 763.0 C842.4 769.4 844.9 774.9 849.0 781.0 C853.1 787.1 858.4 793.8 862.5 799.5 C866.6 805.2 870.0 810.2 873.8 815.0 C877.5 819.8 880.8 823.0 885.0 828.4 C889.2 833.8 894.8 841.6 899.3 847.6 C903.8 853.6 909.2 861.1 912.0 864.6 C914.8 868.1 915.6 868.2 916.3 868.9" fill="none" stroke="#e8222b" stroke-width="6.2" stroke-linecap="round" stroke-linejoin="round"/><path d="M872.4 861.8 C874.3 862.3 879.2 863.6 883.7 864.6 C888.2 865.6 893.9 866.5 899.3 867.5 C904.7 868.5 913.5 869.8 916.3 870.3" fill="none" stroke="#e8222b" stroke-width="6.2" stroke-linecap="round" stroke-linejoin="round"/><path d="M910.7 835.0 C910.7 837.1 910.0 843.4 910.7 847.6 C911.4 851.8 914.0 856.9 914.9 860.4 C915.8 863.9 916.1 867.5 916.3 868.9" fill="none" stroke="#e8222b" stroke-width="6.2" stroke-linecap="round" stroke-linejoin="round"/><path d="M934.1 860.8 C935.8 860.4 939.6 858.9 944.0 858.7 C948.4 858.5 955.2 859.1 960.7 859.5 C966.2 859.9 972.8 860.0 977.3 861.2 C981.8 862.4 984.5 864.7 988.0 866.6 C991.5 868.5 995.0 870.5 998.0 872.4 C1001.0 874.3 1004.3 875.9 1006.3 878.2 C1008.3 880.6 1009.6 883.5 1010.0 886.5 C1010.4 889.5 1010.1 893.5 1008.8 896.5 C1007.5 899.5 1004.7 902.6 1002.2 904.8 C999.7 907.0 997.4 908.6 993.9 909.8 C990.4 911.0 985.5 911.9 981.4 912.2 C977.2 912.5 973.1 912.1 969.0 911.4 C964.9 910.7 960.7 909.1 956.5 908.1 C952.3 907.1 947.7 907.0 944.0 905.6 C940.3 904.2 936.6 902.1 934.1 899.8 C931.6 897.4 930.0 894.7 929.1 891.5 C928.2 888.3 928.4 884.4 928.7 880.7 C929.0 877.0 929.8 872.4 930.8 869.1 C931.8 865.8 933.0 862.6 934.9 860.8 C936.8 859.0 940.8 858.9 942.0 858.5" fill="none" stroke="#e8222b" stroke-width="6.2" stroke-linecap="round" stroke-linejoin="round"/></svg>
</body></html>
